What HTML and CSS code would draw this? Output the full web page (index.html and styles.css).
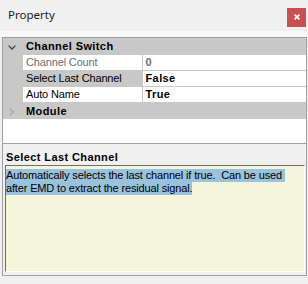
FILE: index.html
```html
<!DOCTYPE html>
<html>
<head>
<meta charset="utf-8">
<title>Property</title>
<link rel="stylesheet" href="styles.css">
</head>
<body>
<div class="titlebar">
  <span class="title">Property</span>
  <button class="close" aria-label="Close">
    <svg width="6" height="6" viewBox="0 0 6 6"><path d="M0.6 0.6L5.4 5.4M5.4 0.6L0.6 5.4" stroke="#fff" stroke-width="1.6" fill="none"/></svg>
  </button>
</div>
<div class="band"></div>
<div class="pgrid">
  <div class="gridview">
    <div class="cat">
      <span class="glyph"><svg class="chev-down" width="8" height="5" viewBox="0 0 8 5"><path d="M0.6 0.6L4 4L7.4 0.6" stroke="#404040" stroke-width="1.3" fill="none"/></svg></span>
      <span class="cat-name">Channel Switch</span>
    </div>
    <div class="prop readonly">
      <span class="margin"></span>
      <span class="label">Channel Count</span>
      <span class="value">0</span>
    </div>
    <div class="prop selected">
      <span class="margin"></span>
      <span class="label">Select Last Channel</span>
      <span class="value">False</span>
    </div>
    <div class="prop">
      <span class="margin"></span>
      <span class="label">Auto Name</span>
      <span class="value">True</span>
    </div>
    <div class="cat">
      <span class="glyph"><svg class="chev-right" width="5" height="8" viewBox="0 0 5 8"><path d="M0.6 0.6L4 4L0.6 7.4" stroke="#a6a6a6" stroke-width="1.3" fill="none"/></svg></span>
      <span class="cat-name">Module</span>
    </div>
  </div>
  <div class="help">
    <div class="help-title">Select Last Channel</div>
    <div class="help-box">
      <span class="sel">Automatically selects the last channel if true.  Can be used </span>
      <span class="sel">after EMD to extract the residual signal.</span>
    </div>
  </div>
</div>
</body>
</html>
```
FILE: styles.css
```css
* { box-sizing: border-box; }
html, body { margin: 0; padding: 0; }
body {
  width: 308px;
  height: 284px;
  overflow: hidden;
  background: #f0f0f0;
  font-family: "Liberation Sans", Arial, sans-serif;
  font-size: 11px;
  color: #000;
}
.titlebar {
  height: 31px;
  display: flex;
  align-items: flex-start;
  background: #f0f0f0;
}
.title {
  font-family: "Noto Sans", sans-serif;
  font-size: 11.5px;
  line-height: 14px;
  margin: 8px 0 0 8px;
  color: #1b1b1b;
}
.close {
  margin: 8px 2px 0 auto;
  width: 19px;
  height: 19px;
  padding: 0;
  border: 0;
  background: #c75050;
  display: flex;
  align-items: center;
  justify-content: center;
}
.close svg { display: block; margin-top: -1px; }
.band { height: 6px; background: #f8f8f8; }
.pgrid {
  margin-left: 2px;
  width: 305px;
  height: 239px;
  border: 1px solid #a0a0a0;
  display: flex;
  flex-direction: column;
}
.gridview {
  height: 106px;
  flex: none;
  background: #fff;
  border-bottom: 1px solid #a0a0a0;
}
.cat {
  display: flex;
  height: 16px;
  background: #c8c8c8;
  font-weight: bold;
  letter-spacing: 0.4px;
  line-height: 16px;
}
.prop + .cat {
  height: 17px;
  border-top: 1px solid #c8c8c8;
}
.glyph { width: 20px; flex: none; }
.glyph svg { display: block; }
.chev-down { margin: 7px 0 0 5px; }
.chev-right { margin: 5px 0 0 6px; }
.cat-name { padding-left: 3px; white-space: nowrap; }
.prop {
  display: grid;
  grid-template-columns: 20px 119px 1fr;
  height: 16px;
  border-top: 1px solid #c8c8c8;
  line-height: 15px;
}
.margin { background: #c8c8c8; }
.label {
  padding-left: 3px;
  letter-spacing: -0.15px;
  white-space: nowrap;
  overflow: hidden;
}
.value {
  border-left: 1px solid #c8c8c8;
  padding-left: 2.5px;
  font-weight: bold;
  letter-spacing: 0.4px;
}
.readonly .label, .readonly .value { color: #6d6d6d; }
.selected .label { background: #c8c8c8; }
.help {
  flex: 1;
  padding: 6px 1px 3px 2px;
  display: flex;
  flex-direction: column;
}
.help-title {
  font-weight: bold;
  letter-spacing: 0.4px;
  line-height: 15px;
  height: 15px;
  margin-left: 1px;
  white-space: nowrap;
}
.help-box {
  height: 107px;
  background: #f5f5dc;
  border-style: solid;
  border-width: 1px;
  border-color: #6d6d6d #fff #fff #6d6d6d;
  padding-top: 3px;
}
.sel {
  display: block;
  width: max-content;
  height: 13px;
  line-height: 13px;
  background: #99c2dd;
  white-space: pre;
  letter-spacing: -0.15px;
}
```
